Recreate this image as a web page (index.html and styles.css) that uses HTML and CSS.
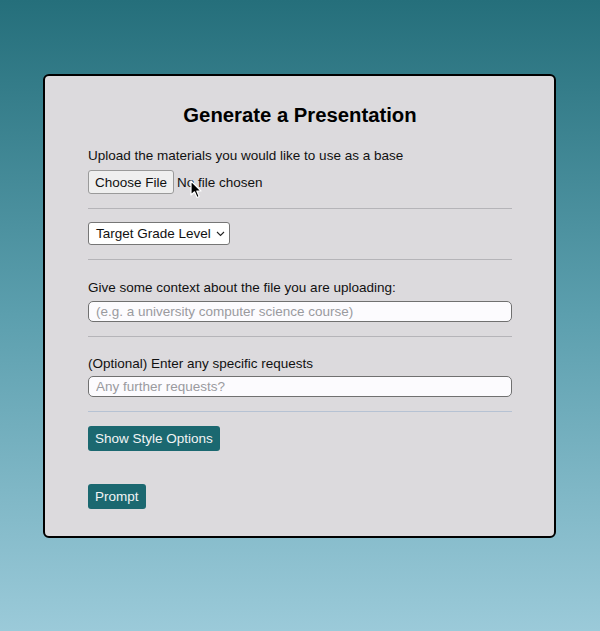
FILE: index.html
```html
<!DOCTYPE html>
<html>
<head>
<meta charset="utf-8">
<link rel="stylesheet" href="styles.css">
</head>
<body>
<div class="page">
  <form class="card">
    <h2 class="title">Generate a Presentation</h2>
    <label class="label first">Upload the materials you would like to use as a base</label>
    <div class="file-row">
      <span class="file-btn">Choose File</span>
      <span class="file-text">No file chosen</span>
      <svg class="cursor" width="12" height="19" viewBox="0 0 12 19"><path d="M1 1 L1 15 L4.5 11.8 L7 17.5 L9.2 16.5 L6.8 11 L11 11 Z" fill="#000" stroke="#fff" stroke-width="1.2" stroke-linejoin="round"/></svg>
    </div>
    <hr class="sep">
    <div class="select">
      <span>Target Grade Level</span>
      <svg width="9" height="6" viewBox="0 0 9 6"><path d="M1 1 L4.5 4.5 L8 1" fill="none" stroke="#222" stroke-width="1.1"/></svg>
    </div>
    <hr class="sep">
    <label class="label l2">Give some context about the file you are uploading:</label>
    <input class="text" type="text" placeholder="(e.g. a university computer science course)">
    <hr class="sep">
    <label class="label l3">(Optional) Enter any specific requests</label>
    <input class="text t3" type="text" placeholder="Any further requests?">
    <hr class="sep blue">
    <button type="button" class="btn b1">Show Style Options</button>
    <button type="button" class="btn b2">Prompt</button>
  </form>
</div>
</body>
</html>
```
FILE: styles.css
```css
html, body {
  margin: 0;
  padding: 0;
}
body {
  width: 600px;
  height: 631px;
  background: linear-gradient(to bottom, #256f7b 0%, #5c9fae 50%, #9bcad9 100%);
  font-family: "Liberation Sans", Arial, sans-serif;
  overflow: hidden;
}
.page {
  padding-top: 74px;
  padding-left: 43px;
}
.card {
  box-sizing: border-box;
  width: 513px;
  height: 464px;
  background: #dcdadd;
  border: 2px solid #000;
  border-radius: 6px;
  padding: 27px 42px 0 43px;
  display: flex;
  flex-direction: column;
  align-items: flex-start;
}
.title {
  margin: 0;
  align-self: stretch;
  text-align: center;
  font-size: 20.3px;
  line-height: 24px;
  font-weight: bold;
  color: #000;
}
.label {
  font-size: 13.5px;
  line-height: 18px;
  color: #111;
}
.label.first { margin-top: 20px; }
.label.l2 { margin-top: 19px; }
.label.l3 { margin-top: 18px; }
.file-row {
  position: relative;
  margin-top: 5px;
  display: flex;
  align-items: center;
  font-size: 13.5px;
}
.file-btn {
  box-sizing: border-box;
  height: 24px;
  padding: 0 6px;
  display: flex;
  align-items: center;
  background: #efefef;
  border: 1px solid #9a9a9a;
  border-radius: 3px;
  color: #111;
}
.file-text {
  margin-left: 3px;
  color: #111;
}
.cursor {
  position: absolute;
  left: 102px;
  top: 10px;
}
.sep {
  align-self: stretch;
  margin: 14px 0 0;
  border: 0;
  height: 1px;
  background: #b5b4b8;
}
.sep.blue { background: #b6c2d3; }
.select {
  box-sizing: border-box;
  margin-top: 13px;
  height: 23px;
  display: flex;
  align-items: center;
  gap: 5px;
  padding: 0 4px 0 7px;
  background: #fff;
  border: 1px solid #767676;
  border-radius: 3px;
  font-size: 13.5px;
  color: #111;
  white-space: nowrap;
}
.text {
  box-sizing: border-box;
  align-self: stretch;
  margin: 4px 0 0;
  height: 21px;
  padding: 0 7px;
  background: #fcfbfe;
  border: 1px solid #707070;
  border-radius: 5px;
  font-family: inherit;
  font-size: 13.5px;
  color: #111;
  outline: none;
}
.text.t3 { margin-top: 3px; }
.text::placeholder { color: #9a9a9e; }
.btn {
  box-sizing: border-box;
  height: 25px;
  padding: 0 7px;
  border: 0;
  border-radius: 3px;
  background: #1b6870;
  color: #f2f4f5;
  font-family: inherit;
  font-size: 13.5px;
  white-space: nowrap;
}
.b1 { margin-top: 14px; }
.b2 { margin-top: 33px; }
```
